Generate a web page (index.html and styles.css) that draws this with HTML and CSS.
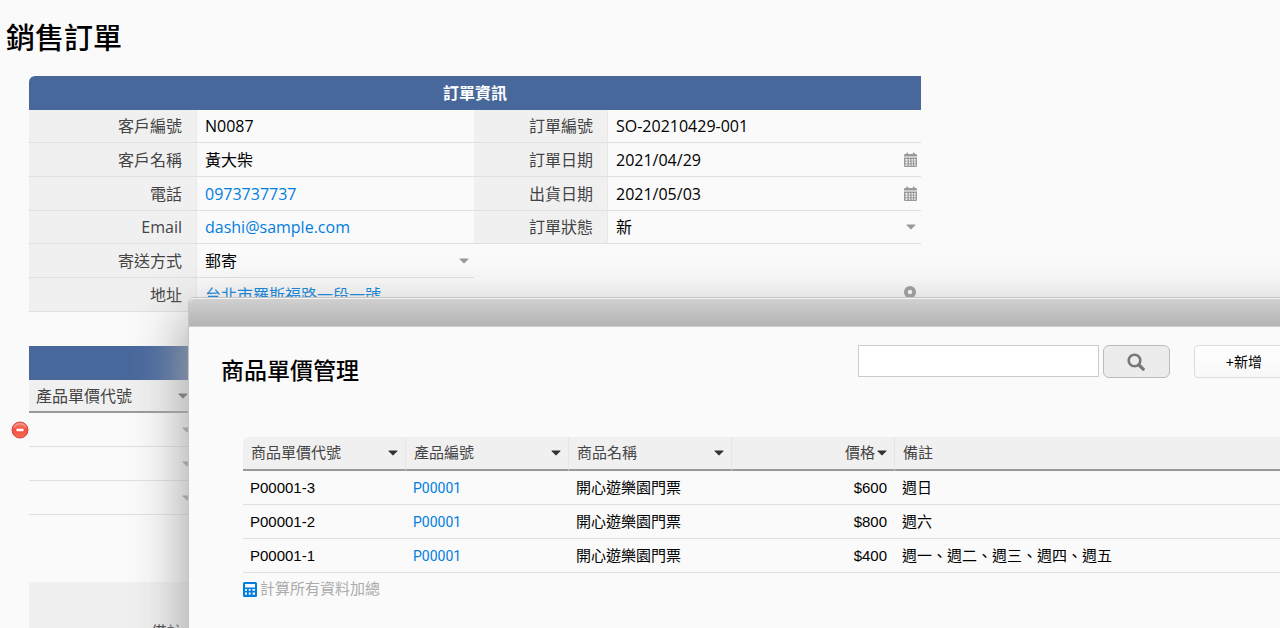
FILE: index.html
```html
<!DOCTYPE html>
<html lang="zh-Hant">
<head>
<meta charset="utf-8">
<title>銷售訂單</title>
<link rel="stylesheet" href="styles.css">
</head>
<body>
<svg class="sprite" aria-hidden="true">
  <symbol id="calendar" viewBox="0 0 13 15">
    <path fill="currentColor" d="M2.300 1.400a.9.9 0 0 1 1.900 0V2h4.600v-.6a.9.9 0 0 1 1.900 0V2h1.100A1.200 1.200 0 0 1 13 3.200V4.600H0V3.200A1.200 1.200 0 0 1 1.200 2h1.100z"/>
    <path fill="currentColor" fill-rule="evenodd" d="M0 5.600h13v8.200a1.200 1.200 0 0 1-1.200 1.200H1.200A1.200 1.200 0 0 1 0 13.800zM1.500 7v1.700h2V7zm3.400 0v1.700h1.300V7zm2.700 0v1.700h1.300V7zm2.500 0v1.700h1.500V7zM1.500 9.600v1.700h2V9.600zm3.400 0v1.700h1.300V9.600zm2.700 0v1.700h1.300V9.600zm2.500 0v1.700h1.500V9.600zM1.500 12.200v1.500h2v-1.500zm3.400 0v1.500h1.300v-1.500zm2.700 0v1.500h1.300v-1.500zm2.500 0v1.500h1.500v-1.500z"/>
  </symbol>
  <symbol id="caret" viewBox="0 0 10 6">
    <path fill="currentColor" d="M1 .5h8q.8 0 .3.700L5.600 5.100q-.6.6-1.200 0L.7 1.200Q.2.5 1 .5z"/>
  </symbol>
  <symbol id="pin" viewBox="0 0 12 17">
    <path fill="currentColor" fill-rule="evenodd" d="M6 0a6 6 0 0 1 6 6c0 2-1 3.500-2 5l-4 6-4-6C1 9.500 0 8 0 6a6 6 0 0 1 6-6zm0 3.700a2.300 2.300 0 1 0 0 4.600 2.300 2.300 0 0 0 0-4.600z"/>
  </symbol>
</svg>

<main class="page">
  <h1 class="page-title">銷售訂單</h1>

  <section class="info" aria-label="訂單資訊">
    <h2 class="band info-band">訂單資訊</h2>
    <label class="label" for="customer-id">客戶編號</label>
    <div class="value"><input class="field" id="customer-id" value="N0087"></div>
    <label class="label" for="order-id">訂單編號</label>
    <div class="value"><input class="field" id="order-id" value="SO-20210429-001"></div>

    <label class="label" for="customer-name">客戶名稱</label>
    <div class="value"><input class="field" id="customer-name" value="黃大柴"></div>
    <label class="label" for="order-date">訂單日期</label>
    <div class="value"><input class="field" id="order-date" value="2021/04/29"><button class="icon-button" type="button" aria-label="選擇訂單日期"><svg class="icon-calendar"><use href="#calendar"/></svg></button></div>

    <span class="label">電話</span>
    <div class="value"><a class="link" href="tel:0973737737">0973737737</a></div>
    <label class="label" for="ship-date">出貨日期</label>
    <div class="value"><input class="field" id="ship-date" value="2021/05/03"><button class="icon-button" type="button" aria-label="選擇出貨日期"><svg class="icon-calendar"><use href="#calendar"/></svg></button></div>

    <span class="label">Email</span>
    <div class="value"><a class="link" href="mailto:dashi@sample.com">dashi@sample.com</a></div>
    <label class="label" for="status">訂單狀態</label>
    <div class="value"><select class="field" id="status"><option>新</option></select><svg class="icon-caret"><use href="#caret"/></svg></div>

    <label class="label" for="shipping">寄送方式</label>
    <div class="value value-half"><select class="field" id="shipping"><option>郵寄</option></select><svg class="icon-caret"><use href="#caret"/></svg></div>

    <span class="label">地址</span>
    <div class="value value-wide"><a class="link" href="#map">台北市羅斯福路一段一號</a><svg class="icon-pin"><use href="#pin"/></svg></div>
  </section>

  <table class="items">
    <colgroup><col class="col-action"><col class="col-code"><col></colgroup>
    <thead>
      <tr class="items-band"><td></td><td class="band" colspan="2"></td></tr>
      <tr><td></td><th class="items-head" scope="col"><div class="split">產品單價代號<svg class="icon-caret dark"><use href="#caret"/></svg></div></th><th class="items-head"></th></tr>
    </thead>
    <tbody>
      <tr>
        <td class="action"><button class="remove" type="button" aria-label="刪除"><svg class="icon-remove" viewBox="0 0 18 18"><defs><linearGradient id="red" x2="0" y2="1"><stop offset="0" stop-color="#f68a7c"/><stop offset=".5" stop-color="#f4503f"/><stop offset="1" stop-color="#fb6a55"/></linearGradient></defs><circle cx="9" cy="9" r="8" fill="url(#red)" stroke="#d5493c"/><path d="M3.200 6.500a6.300 6.300 0 0 1 11.600 0" fill="none" stroke="#fbb5aa" stroke-width=".8"/><rect x="5.500" y="7.700" width="7" height="2.600" rx=".5" fill="#fff"/></svg></button></td>
        <td class="cell"><div class="split end"><svg class="icon-caret"><use href="#caret"/></svg></div></td><td class="cell"></td>
      </tr>
      <tr><td></td><td class="cell"><div class="split end"><svg class="icon-caret"><use href="#caret"/></svg></div></td><td class="cell"></td></tr>
      <tr><td></td><td class="cell"><div class="split end"><svg class="icon-caret"><use href="#caret"/></svg></div></td><td class="cell"></td></tr>
    </tbody>
  </table>

  <div class="notes">
    <label class="label" for="notes">備註</label>
    <textarea class="notes-field" id="notes"></textarea>
  </div>
</main>

<section class="window" role="dialog" aria-labelledby="window-title">
  <div class="titlebar"></div>
  <header class="window-head">
    <h2 class="window-title" id="window-title">商品單價管理</h2>
    <form class="tools">
      <input class="search" type="search" aria-label="搜尋">
      <button class="search-button" type="button" aria-label="搜尋"><svg class="icon-search" viewBox="0 0 18 18"><circle cx="7.500" cy="7.500" r="5.800" fill="none" stroke="currentColor" stroke-width="2.600"/><path d="M12 12l4.200 4.200" stroke="currentColor" stroke-width="3.200" stroke-linecap="round"/></svg></button>
      <button class="add" type="button">+新增</button>
    </form>
  </header>

  <table class="prices">
    <colgroup><col class="col-price"><col class="col-price"><col class="col-price"><col class="col-price"><col></colgroup>
    <thead>
      <tr>
        <th scope="col"><div class="split">商品單價代號<svg class="icon-caret"><use href="#caret"/></svg></div></th>
        <th scope="col"><div class="split">產品編號<svg class="icon-caret"><use href="#caret"/></svg></div></th>
        <th scope="col"><div class="split">商品名稱<svg class="icon-caret"><use href="#caret"/></svg></div></th>
        <th scope="col"><div class="split end">價格<svg class="icon-caret"><use href="#caret"/></svg></div></th>
        <th scope="col">備註</th>
      </tr>
    </thead>
    <tbody>
      <tr><td>P00001-3</td><td><a class="code" href="#p00001">P00001</a></td><td>開心遊樂園門票</td><td class="number">$600</td><td>週日</td></tr>
      <tr><td>P00001-2</td><td><a class="code" href="#p00001">P00001</a></td><td>開心遊樂園門票</td><td class="number">$800</td><td>週六</td></tr>
      <tr><td>P00001-1</td><td><a class="code" href="#p00001">P00001</a></td><td>開心遊樂園門票</td><td class="number">$400</td><td>週一、週二、週三、週四、週五</td></tr>
    </tbody>
  </table>
  <button class="total" type="button"><svg class="icon-calc" viewBox="0 0 14 15"><path fill="currentColor" fill-rule="evenodd" d="M1.500 0h11A1.500 1.500 0 0 1 14 1.500v12a1.500 1.500 0 0 1-1.500 1.500h-11A1.500 1.500 0 0 1 0 13.500v-12A1.500 1.500 0 0 1 1.500 0zM2 2v3.500h10V2zM2 7v1.800h2V7zm3.700 0v1.800h2V7zm3.700 0v1.800H12V7zM2 10.600v2.200h2v-2.200zm3.700 0v2.200h2v-2.200zm3.900 0v2.200H12v-2.200z"/></svg>計算所有資料加總</button>
</section>
</body>
</html>
```

FILE: styles.css
```css
* { box-sizing: border-box; }

body {
  margin: 0;
  height: 100vh;
  overflow: hidden;
  position: relative;
  background: #fafafa;
  color: #000;
  font: 16px/24px "Open Sans", "Noto Sans CJK TC", sans-serif;
}

h1, h2 { margin: 0; font-weight: 500; }
button, input, select, textarea { font: inherit; color: inherit; }
button { padding: 0; border: 0; background: none; cursor: pointer; }
a { color: #007edf; text-decoration: none; }
table { border-collapse: separate; border-spacing: 0; table-layout: fixed; }
th, td { padding: 0; font-weight: 400; text-align: left; }

.sprite { display: none; }
.icon-caret { width: 10px; height: 6px; flex: none; color: #999; }
.icon-calendar { display: block; width: 13px; height: 15px; }
.icon-pin { width: 12px; height: 17px; flex: none; color: #999; }
.icon-remove { display: block; width: 18px; height: 18px; }
.dark { color: #555; }

.page { max-width: 921px; }
.page-title { padding: 18px 6px; font-size: 29px; line-height: 40px; }

.band { background: #48689c; color: #fff; }
.label {
  display: flex;
  align-items: center;
  justify-content: flex-end;
  padding-right: 14px;
  background: #f0f0f0;
  color: #444;
}

.info {
  display: grid;
  grid-template-columns: 168fr 277fr 134fr 313fr;
  grid-template-rows: 34px 33px 34px 34px 33px 34px 34px;
  margin-left: 29px;
}
.info-band {
  grid-column: 1 / -1;
  border-radius: 6px 0 0 0;
  font-size: 16px;
  font-weight: 700;
  line-height: 34px;
  text-align: center;
}
.info .label { border-bottom: 1px solid #e0e0e0; border-right: 1px solid #e8e8e8; }
.value {
  display: flex;
  align-items: center;
  min-width: 0;
  padding: 0 5px 0 8px;
  border-bottom: 1px solid #e0e0e0;
}
.value-half { grid-column: 2; }
.value-wide { grid-column: 2 / -1; justify-content: space-between; }
.info .value-half + .label { grid-column: 1; }
.field {
  flex: 1;
  min-width: 0;
  height: 24px;
  padding: 0;
  border: 0;
  background: none;
  appearance: none;
}
.icon-button { flex: none; margin-right: -1px; color: #999; }

.items { width: 100%; margin-top: 34px; }
.col-action { width: 29px; }
.col-code { width: 163px; }
.items-band { height: 34px; }
.items-head {
  height: 33px;
  padding: 0 4px 0 7px;
  border-bottom: 2px solid #999;
  background: #f0f0f0;
  color: #444;
}
.cell { height: 34px; border-bottom: 1px solid #e0e0e0; }
.remove { display: block; margin-left: 11px; }
.split { display: flex; align-items: center; justify-content: space-between; }
.end { justify-content: flex-end; }

.notes {
  display: grid;
  grid-template-columns: 168fr 724fr;
  height: 100px;
  margin: 67px 0 0 29px;
}
.notes-field { border: 0; background: none; resize: none; }

.window {
  position: absolute;
  top: 297px;
  right: -47px;
  bottom: -120px;
  left: 188px;
  border: 1px solid #c4c4c4;
  border-radius: 6px 6px 0 0;
  background: #fafafa;
  box-shadow: 0 22px 50px 6px rgba(165, 165, 165, .95);
  font-family: "Liberation Sans", "Noto Sans CJK TC", sans-serif;
  font-size: 15px;
}
.titlebar {
  height: 29px;
  border-top: 1px solid #f4f4f4;
  border-bottom: 1px solid #ccc;
  border-radius: 5px 5px 0 0;
  background: linear-gradient(#d0d0d0, #b4b4b4);
}
.window-head {
  display: flex;
  align-items: flex-start;
  justify-content: space-between;
  padding: 18px 32px 0;
}
.window-title { padding-top: 8px; font-size: 23px; line-height: 36px; }
.tools { display: flex; align-items: flex-start; }
.search {
  width: 241px;
  height: 32px;
  padding: 0 8px;
  border: 1px solid #ccc;
  background: #fff;
  appearance: none;
}
.search-button {
  display: grid;
  place-items: center;
  width: 67px;
  height: 33px;
  margin: 0 24px 0 4px;
  border: 1px solid #bbb;
  border-radius: 6px;
  background: #ececec;
  color: #777;
}
.icon-search { width: 18px; height: 18px; }
.add {
  height: 33px;
  padding: 0 31px;
  border: 1px solid #ddd;
  border-radius: 4px;
  background: linear-gradient(#fff, #f8f8f8);
  font-size: 14px;
}

.prices { width: calc(100% - 54px); margin: 48px 0 0 54px; }
.col-price { width: 163px; }
.prices th {
  height: 34px;
  padding: 0 7px 0 8px;
  border-right: 1px solid #e6e6e6;
  border-bottom: 2px solid #999;
  background: #f0f0f0;
  color: #444;
}
.prices th:first-child { border-radius: 6px 0 0 0; }
.prices .icon-caret { color: #333; }
.prices .end { gap: 2px; }
.prices td { height: 34px; padding: 0 8px 0 7px; border-bottom: 1px solid #e0e0e0; }
.prices .number { text-align: right; }
.code { font-family: Roboto, sans-serif; font-size: 14px; }
.total {
  display: flex;
  align-items: center;
  gap: 3px;
  margin: 4px 0 0 54px;
  color: #aaa;
}
.icon-calc { width: 14px; height: 15px; color: #007edf; }
```
